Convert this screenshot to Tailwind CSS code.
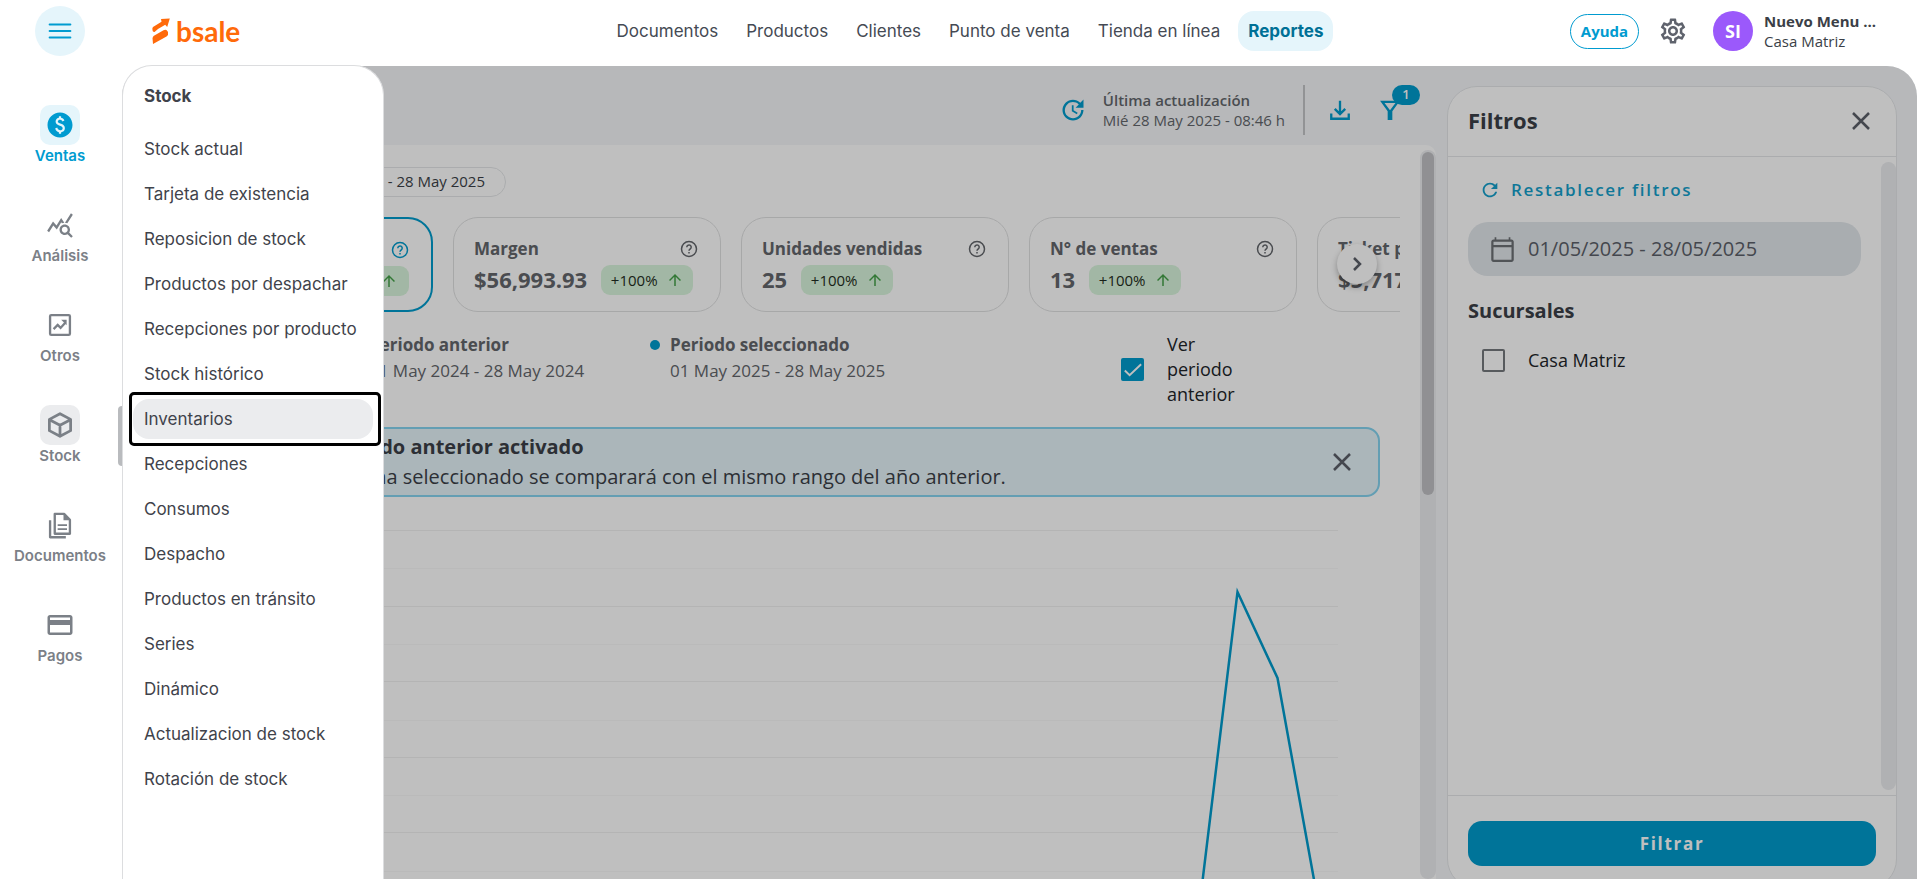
<!DOCTYPE html>
<html lang="es">

<head>
    <meta charset="UTF-8">
    <meta name="viewport" content="width=device-width, initial-scale=1.0">
    <title>bsale - Reportes</title>
    <script src="https://cdn.jsdelivr.net/npm/@tailwindcss/browser@4"></script>
</head>

<body class="flex h-screen flex-col overflow-hidden bg-white font-['Open_Sans','Noto_Sans',sans-serif] text-[#3b3f47]">
    <!-- Top bar -->
    <header class="flex h-[66px] shrink-0 items-center pb-1 pl-[35px] pr-10">
        <div class="flex flex-1 items-center">
            <button type="button" aria-label="Menú" class="flex size-[50px] items-center justify-center rounded-full bg-[#e5f5fb]">
                <svg class="size-[26px]" viewBox="0 0 24 24" fill="none" stroke="#009bd0" stroke-width="2" stroke-linecap="round">
                    <path d="M2.500 6h19M2.500 12h19M2.500 18h19" />
                </svg>
            </button>
            <a href="#" aria-label="bsale" class="ml-[67px] flex items-center gap-[6px]">
                <svg class="h-[26px] w-[18px]" viewBox="0 0 18 26" fill="#ff6a0a">
                    <path d="M1 9 9.500 3.800 9 1 17.800.5 15.200 9 13.200 6.800 6 11 2.500 14Q.6 14.200.500 12.300 0 10 1 9z" />
                    <path d="M1.500 18 11.500 12.300Q14 11 15.300 13L16 14V17L14.500 18.500 1 26 .500 20z" />
                </svg>
                <span class="font-['Lato',sans-serif] text-[28px] font-bold leading-none text-[#ff6a0a]">bsale</span>
            </a>
        </div>

        <nav class="ml-7 flex items-center gap-2 font-['Inter',sans-serif] text-[17px] text-[#454a54]">
            <a href="#" class="flex h-10 items-center px-[10px] pt-[2px]">Documentos</a>
            <a href="#" class="flex h-10 items-center px-[10px] pt-[2px]">Productos</a>
            <a href="#" class="flex h-10 items-center px-[10px] pt-[2px]">Clientes</a>
            <a href="#" class="flex h-10 items-center px-[10px] pt-[2px]">Punto de venta</a>
            <a href="#" class="flex h-10 items-center px-[10px] pt-[2px]">Tienda en línea</a>
            <a href="#" class="flex h-10 items-center rounded-2xl bg-[#e5f5fb] px-[10px] pt-[2px] font-bold text-[#007096]">Reportes</a>
        </nav>

        <div class="flex flex-1 items-center justify-end">
            <button type="button" class="h-[35px] w-[69px] rounded-full border-[1.5px] border-[#009bd0] text-[15px] font-bold text-[#009bd0]">Ayuda</button>
            <button type="button" aria-label="Configuración" class="ml-[19px]">
                <svg class="size-[30px]" viewBox="0 0 24 24" fill="#5f636d">
                    <path d="M19.430 12.980c.04-.32.07-.64.07-.98s-.03-.66-.07-.98l2.110-1.650c.19-.15.24-.42.12-.64l-2-3.460c-.09-.16-.26-.25-.44-.25-.06 0-.12.01-.17.03l-2.490 1c-.52-.4-1.080-.73-1.690-.98l-.38-2.650C14.460 2.180 14.250 2 14 2h-4c-.25 0-.46.18-.49.42l-.38 2.650c-.61.25-1.170.59-1.690.98l-2.490-1c-.06-.02-.12-.03-.18-.03-.17 0-.34.09-.43.25l-2 3.460c-.13.22-.07.49.12.64l2.110 1.650c-.04.32-.07.65-.07.98s.03.66.07.98l-2.110 1.650c-.19.15-.24.42-.12.64l2 3.460c.09.16.26.25.44.25.06 0 .12-.01.17-.03l2.490-1c.52.4 1.080.73 1.690.98l.38 2.650c.03.24.24.42.49.42h4c.25 0 .46-.18.49-.42l.38-2.650c.61-.25 1.170-.59 1.690-.98l2.490 1c.06.02.12.03.18.03.17 0 .34-.09.43-.25l2-3.460c.12-.22.07-.49-.12-.64l-2.110-1.650zm-1.980-1.710c.04.31.05.52.05.73 0 .21-.02.43-.05.73l-.14 1.130.89.7 1.080.84-.7 1.210-1.270-.51-1.040-.42-.9.68c-.43.32-.84.56-1.250.73l-1.060.43-.16 1.130-.2 1.350h-1.400l-.19-1.350-.16-1.130-1.060-.43c-.43-.18-.83-.41-1.230-.71l-.91-.7-1.060.43-1.270.51-.7-1.210 1.080-.84.89-.7-.14-1.130c-.03-.31-.05-.54-.05-.74s.02-.43.05-.73l.14-1.130-.89-.7-1.080-.84.7-1.210 1.270.51 1.040.42.9-.68c.43-.32.84-.56 1.250-.73l1.060-.43.16-1.130.2-1.350h1.390l.19 1.350.16 1.130 1.060.43c.43.18.83.41 1.230.71l.91.7 1.060-.43 1.270-.51.7 1.210-1.070.85-.89.7.14 1.130zM12 8c-2.210 0-4 1.790-4 4s1.790 4 4 4 4-1.790 4-4-1.790-4-4-4zm0 6c-1.100 0-2-.9-2-2s.9-2 2-2 2 .9 2 2-.9 2-2 2z" />
                </svg>
            </button>
            <div class="ml-[25px] flex size-10 items-center justify-center rounded-full bg-[#9b59fb] text-lg font-bold text-white">SI</div>
            <div class="ml-[11px] w-[113px] text-[15px] leading-5">
                <p class="font-bold">Nuevo Menu ...</p>
                <p>Casa Matriz</p>
            </div>
        </div>
    </header>

    <div class="flex min-h-0 flex-1">
        <!-- Sidebar -->
        <nav class="flex w-[122px] shrink-0 flex-col gap-[38px] pt-[39px] text-center font-['Inter',sans-serif] text-[15px] font-semibold leading-[22px] text-[#7b8087]">
            <a href="#" class="flex flex-col items-center pr-[2px] text-[#009bd0]">
                <span class="flex size-10 items-center justify-center rounded-[10px] bg-[#e5f5fb]">
                    <svg class="size-[30px]" viewBox="0 0 24 24" fill="currentColor">
                        <path d="M12 2C6.480 2 2 6.480 2 12s4.480 10 10 10 10-4.480 10-10S17.520 2 12 2zm.88 15.760V19h-1.750v-1.290c-.74-.18-2.390-.77-3.020-2.960l1.650-.67c.06.22.58 2.090 2.400 2.090.93 0 1.980-.48 1.980-1.610 0-.96-.7-1.460-2.280-2.030-1.100-.39-3.350-1.030-3.350-3.310 0-.1.010-2.400 2.620-2.960V5h1.750v1.240c1.840.32 2.510 1.790 2.660 2.230l-1.580.67c-.11-.35-.59-1.340-1.900-1.340-.7 0-1.810.37-1.810 1.390 0 .95.86 1.310 2.640 1.900 2.400.83 3.010 2.050 3.010 3.450 0 2.630-2.500 3.130-3.020 3.220z" />
                    </svg>
                </span>
                Ventas
            </a>
            <a href="#" class="flex flex-col items-center pr-[2px]">
                <span class="flex size-10 items-center justify-center">
                    <svg class="size-7" viewBox="0 0 24 24" fill="currentColor">
                        <path d="M19.880 18.470c.44-.7.7-1.510.7-2.390 0-2.490-2.010-4.500-4.500-4.500s-4.500 2.010-4.500 4.500 2.010 4.500 4.490 4.500c.88 0 1.700-.26 2.390-.7L21.580 23 23 21.580l-3.120-3.110zm-3.800.11c-1.380 0-2.500-1.120-2.500-2.500s1.120-2.500 2.500-2.500 2.500 1.120 2.500 2.500-1.120 2.500-2.500 2.500zm-.36-8.500c-.74.02-1.450.18-2.100.45l-.55-.83-3.800 6.180-3.010-3.520-3.630 5.810L1 17l5-8 3 3.500L13 6l2.720 4.080zm2.590.5c-.64-.28-1.330-.45-2.050-.49L21.380 2 23 3.180l-4.690 7.400z" />
                    </svg>
                </span>
                Análisis
            </a>
            <a href="#" class="flex flex-col items-center pr-[2px]">
                <span class="flex size-10 items-center justify-center">
                    <svg class="size-7" viewBox="0 0 24 24" fill="none" stroke="currentColor" stroke-width="2">
                        <rect x="3.500" y="3.500" width="17" height="17" rx="1" />
                        <path d="M6.500 15.500 10 12l2.500 2.500 4-4.500" />
                        <path d="M13 7.500h4.700v4.700z" fill="currentColor" stroke="none" />
                    </svg>
                </span>
                Otros
            </a>
            <a href="#" class="relative flex flex-col items-center pr-[2px]">
                <span class="flex size-10 items-center justify-center rounded-[10px] bg-[#ebecee]">
                    <svg class="size-[30px]" viewBox="0 0 24 24" fill="none" stroke="currentColor" stroke-width="2.200" stroke-linejoin="round">
                        <path d="M12 3 20.500 7.500v9L12 21l-8.500-4.500v-9zM4 8l8 4.200L20 8M12 12.200V21" />
                    </svg>
                </span>
                Stock
                <i class="absolute right-0 top-px h-[60px] w-1 rounded-l bg-[#b9bbbe]"></i>
            </a>
            <a href="#" class="flex flex-col items-center pr-[2px]">
                <span class="flex size-10 items-center justify-center">
                    <svg class="size-7" viewBox="0 0 24 24" fill="none" stroke="currentColor" stroke-width="2" stroke-linejoin="round">
                        <path d="M7.500 2.500h8l5 5v12h-13z" />
                        <path d="M15 2v6h6z" fill="currentColor" stroke="none" />
                        <path d="M10 12h8M10 15.500h8" stroke-width="1.500" />
                        <path d="M3.500 8v14.500H17" />
                    </svg>
                </span>
                Documentos
            </a>
            <a href="#" class="flex flex-col items-center pr-[2px]">
                <span class="flex size-10 items-center justify-center">
                    <svg class="size-[30px]" viewBox="0 0 24 24" fill="currentColor">
                        <path d="M20 4H4c-1.110 0-1.990.89-1.990 2L2 18c0 1.110.89 2 2 2h16c1.110 0 2-.89 2-2V6c0-1.110-.89-2-2-2zm0 14H4v-6h16v6zm0-10H4V6h16v2z" />
                    </svg>
                </span>
                Pagos
            </a>
        </nav>

        <div class="relative flex min-w-0 flex-1">
            <main class="relative flex min-w-0 flex-1 overflow-hidden rounded-t-[30px] bg-[#f4f6f9]">
                <!-- Report -->
                <section class="flex min-w-0 flex-1 flex-col pl-5">
                    <div class="flex h-[79px] shrink-0 items-center justify-end pr-[43px] pt-2">
                        <svg class="size-7" viewBox="0 0 24 24" fill="#009bcc">
                            <path d="M21 10.120h-6.780l2.740-2.820c-2.730-2.700-7.150-2.800-9.880-.1-2.730 2.710-2.730 7.080 0 9.790s7.150 2.710 9.880 0C18.320 15.650 19 14.080 19 12.100h2c0 1.980-.88 4.550-2.640 6.290-3.510 3.480-9.210 3.480-12.720 0-3.500-3.470-3.530-9.110-.02-12.580s9.140-3.470 12.650 0L21 3v7.120zM12.500 8v4.250l3.500 2.080-.72 1.210L11 13V8h1.500z" />
                        </svg>
                        <div class="ml-4 text-[15px] leading-5 text-[#63666b]">
                            <p class="font-semibold">Última actualización</p>
                            <p>Mié 28 May 2025 - 08:46 h</p>
                        </div>
                        <div class="ml-[18px] h-[50px] w-[2px] bg-[#c3c5c7]"></div>
                        <button type="button" aria-label="Descargar" class="ml-[21px]">
                            <svg class="size-7" viewBox="0 0 24 24" fill="none" stroke="#009bcc" stroke-width="2">
                                <path d="M12 4v11M7.500 11l4.500 4.500 4.500-4.500M4.500 15v4.500h15V15" />
                            </svg>
                        </button>
                        <button type="button" aria-label="Filtros" class="relative ml-[22px]">
                            <svg class="size-7" viewBox="0 0 24 24" fill="#009bcc" fill-rule="evenodd">
                                <path d="M3.500 4h17l-6.500 9v7.500h-4V13zM7.300 6l4.700 6.300L16.700 6z" />
                            </svg>
                            <span class="absolute -top-[11px] left-4 flex h-5 w-7 items-center justify-center rounded-full bg-[#009bcc] text-[13px] font-semibold text-white">1</span>
                        </button>
                    </div>

                    <div class="mr-[11px] flex min-h-0 flex-1 rounded-t-[10px] bg-white">
                        <div class="flex min-w-0 flex-1 flex-col overflow-hidden pl-[23px] pr-5 pt-[22px]">
                            <div class="flex h-[30px] w-[341px] shrink-0 items-center justify-end rounded-full border border-[#e4e6e8] pb-[2px] pr-5 text-[15px] font-medium">01 May 2025 - 28 May 2025</div>

                            <div class="relative mt-5 flex shrink-0">
                                <div class="flex flex-1 gap-5 overflow-hidden text-[#63666b]">
                                    <article aria-label="Venta" class="flex h-[95px] w-[268px] shrink-0 flex-col items-end rounded-[25px] border-2 border-[#009bcc] px-[22px] pt-[18px]">
                                        <div class="flex h-[25px] items-center">
                                            <svg class="size-[18px]" viewBox="0 0 18 18" fill="none" stroke="#009bcc" stroke-width="1.500">
                                                <circle cx="9" cy="9" r="7.500" />
                                                <path d="M6.800 7.200a2.200 2.200 0 1 1 3.500 1.700C9.400 9.600 9 9.900 9 10.800M9 12v1.500" />
                                            </svg>
                                        </div>
                                        <span class="mt-1 flex h-[30px] w-[92px] items-center justify-end rounded-[9px] bg-[#d9f5dc] pr-[11px]">
                                            <svg class="size-[18px]" viewBox="0 0 24 24" fill="#43a047"><path d="m4 12 1.410 1.410L11 7.830V20h2V7.830l5.580 5.590L20 12l-8-8-8 8z" /></svg>
                                        </span>
                                    </article>
                                    <article class="h-[95px] w-[268px] shrink-0 rounded-[25px] border border-[#dfe0e1] px-5 pt-[18px]">
                                        <div class="flex h-[25px] items-center justify-between">
                                            <h3 class="text-[17px] font-bold">Margen</h3>
                                            <svg class="mr-[2px] size-[18px]" viewBox="0 0 18 18" fill="none" stroke="#63666b" stroke-width="1.500">
                                                <circle cx="9" cy="9" r="7.500" />
                                                <path d="M6.800 7.200a2.200 2.200 0 1 1 3.500 1.700C9.400 9.600 9 9.900 9 10.800M9 12v1.500" />
                                            </svg>
                                        </div>
                                        <div class="mt-1 flex items-start gap-[14px]">
                                            <strong class="text-[22px] leading-7">$56,993.93</strong>
                                            <span class="flex h-[30px] w-[92px] items-center justify-center gap-2 rounded-[9px] bg-[#d9f5dc] text-[15px] font-medium text-[#1f2d22]">+100%
                                                <svg class="size-[18px]" viewBox="0 0 24 24" fill="#43a047"><path d="m4 12 1.410 1.410L11 7.830V20h2V7.830l5.580 5.590L20 12l-8-8-8 8z" /></svg>
                                            </span>
                                        </div>
                                    </article>
                                    <article class="h-[95px] w-[268px] shrink-0 rounded-[25px] border border-[#dfe0e1] px-5 pt-[18px]">
                                        <div class="flex h-[25px] items-center justify-between">
                                            <h3 class="text-[17px] font-bold">Unidades vendidas</h3>
                                            <svg class="mr-[2px] size-[18px]" viewBox="0 0 18 18" fill="none" stroke="#63666b" stroke-width="1.500">
                                                <circle cx="9" cy="9" r="7.500" />
                                                <path d="M6.800 7.200a2.200 2.200 0 1 1 3.500 1.700C9.400 9.600 9 9.900 9 10.800M9 12v1.500" />
                                            </svg>
                                        </div>
                                        <div class="mt-1 flex items-start gap-[14px]">
                                            <strong class="text-[22px] leading-7">25</strong>
                                            <span class="flex h-[30px] w-[92px] items-center justify-center gap-2 rounded-[9px] bg-[#d9f5dc] text-[15px] font-medium text-[#1f2d22]">+100%
                                                <svg class="size-[18px]" viewBox="0 0 24 24" fill="#43a047"><path d="m4 12 1.410 1.410L11 7.830V20h2V7.830l5.580 5.590L20 12l-8-8-8 8z" /></svg>
                                            </span>
                                        </div>
                                    </article>
                                    <article class="h-[95px] w-[268px] shrink-0 rounded-[25px] border border-[#dfe0e1] px-5 pt-[18px]">
                                        <div class="flex h-[25px] items-center justify-between">
                                            <h3 class="text-[17px] font-bold">N° de ventas</h3>
                                            <svg class="mr-[2px] size-[18px]" viewBox="0 0 18 18" fill="none" stroke="#63666b" stroke-width="1.500">
                                                <circle cx="9" cy="9" r="7.500" />
                                                <path d="M6.800 7.200a2.200 2.200 0 1 1 3.500 1.700C9.400 9.600 9 9.900 9 10.800M9 12v1.500" />
                                            </svg>
                                        </div>
                                        <div class="mt-1 flex items-start gap-[14px]">
                                            <strong class="text-[22px] leading-7">13</strong>
                                            <span class="flex h-[30px] w-[92px] items-center justify-center gap-2 rounded-[9px] bg-[#d9f5dc] text-[15px] font-medium text-[#1f2d22]">+100%
                                                <svg class="size-[18px]" viewBox="0 0 24 24" fill="#43a047"><path d="m4 12 1.410 1.410L11 7.830V20h2V7.830l5.580 5.590L20 12l-8-8-8 8z" /></svg>
                                            </span>
                                        </div>
                                    </article>
                                    <article class="h-[95px] w-[268px] shrink-0 rounded-[25px] border border-[#dfe0e1] px-5 pt-[18px]">
                                        <h3 class="text-[17px] font-bold leading-[25px]">Ticket promedio</h3>
                                        <strong class="mt-1 block text-[22px] leading-7">$5,717.16</strong>
                                    </article>
                                </div>
                                <button type="button" aria-label="Siguiente" class="absolute right-[23px] top-[27px] flex size-10 items-center justify-center rounded-full bg-white shadow-[0_3px_6px_rgba(0,0,0,0.3)]">
                                    <svg class="size-6" viewBox="0 0 24 24" fill="none" stroke="#5b5f69" stroke-width="2.500">
                                        <path d="m9 6 6 6-6 6" />
                                    </svg>
                                </button>
                            </div>

                            <div class="mt-5 flex shrink-0 items-start text-[17px] leading-[26px] text-[#63666b]">
                                <div class="flex w-[301px] gap-[10px] pl-[184px]">
                                    <i class="mt-2 size-[10px] shrink-0 rounded-full bg-[#9aa0a6]"></i>
                                    <div class="whitespace-nowrap">
                                        <h4 class="font-bold">Periodo anterior</h4>
                                        <p>01 May 2024 - 28 May 2024</p>
                                    </div>
                                </div>
                                <div class="ml-[184px] flex gap-[10px]">
                                    <i class="mt-2 size-[10px] shrink-0 rounded-full bg-[#009bcc]"></i>
                                    <div class="whitespace-nowrap">
                                        <h4 class="font-bold">Periodo seleccionado</h4>
                                        <p>01 May 2025 - 28 May 2025</p>
                                    </div>
                                </div>
                                <label class="ml-auto mr-[162px] flex w-[117px] items-center gap-[23px] text-lg leading-[25px] text-[#212429]">
                                    <span class="relative flex shrink-0">
                                        <input type="checkbox" checked class="size-[23px] appearance-none rounded-[2px] border-2 border-[#63666b] checked:border-[#009bcc] checked:bg-[#009bcc]">
                                        <svg class="pointer-events-none absolute inset-0 size-[23px]" viewBox="0 0 24 24" fill="none" stroke="#fff" stroke-width="2">
                                            <path d="m4 13 5 5L21 6.500" />
                                        </svg>
                                    </span>
                                    Ver periodo anterior
                                </label>
                            </div>

                            <div class="mr-5 mt-5 flex h-[70px] shrink-0 items-center rounded-[14px] border-2 border-[#84d3ef] bg-[#e4f3f9] pl-[70px] pr-6 text-xl leading-[30px]">
                                <div class="flex-1 text-[#3b3f47]">
                                    <h4 class="font-bold">Modo de periodo anterior activado</h4>
                                    <p>El rango de fecha seleccionado se comparará con el mismo rango del año anterior.</p>
                                </div>
                                <button type="button" aria-label="Cerrar aviso">
                                    <svg class="size-6" viewBox="0 0 24 24" fill="none" stroke="#5b5f69" stroke-width="2.500">
                                        <path d="m4 4 16 16M20 4 4 20" />
                                    </svg>
                                </button>
                            </div>

                            <div class="mt-[33px] min-h-0 flex-1 overflow-hidden pr-[62px]">
                                <svg class="w-full" viewBox="0 0 1173 380" fill="none">
                                    <path stroke="#f1f1f1" d="M0 .5h1173M0 76.500h1173M0 151.500h1173M0 227.500h1173M0 302.500h1173" />
                                    <path stroke="#f9f9f9" d="M0 38.500h1173M0 114.500h1173M0 190.500h1173M0 265.500h1173M0 341.500h1173" />
                                    <path stroke="#009bcc" stroke-width="2.500" d="m1034 380 38.500-318 40 86 42 232" />
                                </svg>
                            </div>
                        </div>
                        <div class="mt-[5px] w-4 shrink-0 rounded-full bg-[#ebecef] px-[2px] pt-[2px]">
                            <div class="h-[343px] rounded-full bg-[#c0c1c4]"></div>
                        </div>
                    </div>
                </section>

                <!-- Filters -->
                <aside class="-mb-[10px] mr-5 mt-5 flex w-[450px] shrink-0 flex-col rounded-[30px] border border-[#e4e6e8] bg-white">
                    <div class="flex h-[70px] shrink-0 items-center justify-between border-b border-[#e4e6e8] pb-[2px] pl-5 pr-[23px]">
                        <h2 class="text-[22px] font-bold">Filtros</h2>
                        <button type="button" aria-label="Cerrar filtros">
                            <svg class="size-6" viewBox="0 0 24 24" fill="none" stroke="#5b5f69" stroke-width="2.500">
                                <path d="m4 4 16 16M20 4 4 20" />
                            </svg>
                        </button>
                    </div>
                    <div class="flex min-h-0 flex-1 py-[5px]">
                        <div class="flex-1 px-5">
                            <button type="button" class="mt-[13px] flex h-[30px] items-center gap-[10px] pl-[11px] text-[17px] font-semibold tracking-widest text-[#149fcb]">
                                <svg class="size-[22px]" viewBox="0 0 24 24" fill="currentColor">
                                    <path d="M17.650 6.350C16.200 4.900 14.210 4 12 4c-4.420 0-7.990 3.580-7.990 8s3.570 8 7.990 8c3.730 0 6.840-2.550 7.730-6h-2.080c-.82 2.330-3.040 4-5.650 4-3.310 0-6-2.690-6-6s2.690-6 6-6c1.660 0 3.140.69 4.220 1.780L13 11h7V4l-2.350 2.350z" />
                                </svg>
                                Restablecer filtros
                            </button>
                            <label class="mt-[17px] flex h-[54px] items-center gap-3 rounded-[20px] bg-[#e2e7eb] pl-[21px] pr-4">
                                <svg class="size-[27px] shrink-0" viewBox="0 0 24 24" fill="#6c7074">
                                    <path d="M20 3h-1V1h-1.500v2h-11V1H5v2H4c-1.100 0-2 .9-2 2v16c0 1.100.9 2 2 2h16c1.100 0 2-.9 2-2V5c0-1.100-.9-2-2-2zm0 18H4V10h16v11zm0-13H4V5h16v3z" />
                                </svg>
                                <input type="text" aria-label="Rango de fechas" value="01/05/2025 - 28/05/2025" class="w-full min-w-0 bg-transparent text-xl text-[#5b5f69] outline-none">
                            </label>
                            <h3 class="mt-5 text-xl font-bold leading-[30px]">Sucursales</h3>
                            <label class="mt-[19px] flex h-[30px] items-center gap-[23px] pl-[14px] text-lg text-[#212429]">
                                <input type="checkbox" class="size-[23px] appearance-none rounded-[2px] border-2 border-[#75787c]">
                                Casa Matriz
                            </label>
                        </div>
                        <div class="w-[15px] rounded-full bg-[#ebecef]"></div>
                    </div>
                    <div class="shrink-0 border-t border-[#e4e6e8] px-5 pb-[22px] pt-[25px]">
                        <button type="button" class="h-[45px] w-full rounded-[14px] bg-[#009bcc] text-[17px] font-bold tracking-widest text-white">Filtrar</button>
                    </div>
                </aside>

                <div class="absolute inset-0 bg-black/25"></div>
            </main>

            <!-- Stock submenu -->
            <nav class="absolute -top-px bottom-0 left-0 w-[262px] rounded-t-[30px] border border-b-0 border-[#dcdddf] bg-white px-[10px] pt-[15px] font-['Inter',sans-serif] text-[17px] text-[#3f434b]">
                <h2 class="mb-[18px] px-[11px] leading-[30px] font-bold">Stock</h2>
                <ul class="flex flex-col gap-[5px]">
                    <li><a href="#" class="flex h-10 items-center rounded-2xl px-[11px] pt-[2px]">Stock actual</a></li>
                    <li><a href="#" class="flex h-10 items-center rounded-2xl px-[11px] pt-[2px]">Tarjeta de existencia</a></li>
                    <li><a href="#" class="flex h-10 items-center rounded-2xl px-[11px] pt-[2px]">Reposicion de stock</a></li>
                    <li><a href="#" class="flex h-10 items-center rounded-2xl px-[11px] pt-[2px]">Productos por despachar</a></li>
                    <li><a href="#" class="flex h-10 items-center whitespace-nowrap rounded-2xl px-[11px] pt-[2px]">Recepciones por producto</a></li>
                    <li><a href="#" class="flex h-10 items-center rounded-2xl px-[11px] pt-[2px]">Stock histórico</a></li>
                    <li class="relative">
                        <a href="#" class="flex h-10 items-center rounded-2xl bg-[#ebecee] px-[11px] pt-[2px]">Inventarios</a>
                        <i class="pointer-events-none absolute -inset-y-[7px] -left-1 -right-2 rounded-[5px] border-[3px] border-black"></i>
                    </li>
                    <li><a href="#" class="flex h-10 items-center rounded-2xl px-[11px] pt-[2px]">Recepciones</a></li>
                    <li><a href="#" class="flex h-10 items-center rounded-2xl px-[11px] pt-[2px]">Consumos</a></li>
                    <li><a href="#" class="flex h-10 items-center rounded-2xl px-[11px] pt-[2px]">Despacho</a></li>
                    <li><a href="#" class="flex h-10 items-center rounded-2xl px-[11px] pt-[2px]">Productos en tránsito</a></li>
                    <li><a href="#" class="flex h-10 items-center rounded-2xl px-[11px] pt-[2px]">Series</a></li>
                    <li><a href="#" class="flex h-10 items-center rounded-2xl px-[11px] pt-[2px]">Dinámico</a></li>
                    <li><a href="#" class="flex h-10 items-center rounded-2xl px-[11px] pt-[2px]">Actualizacion de stock</a></li>
                    <li><a href="#" class="flex h-10 items-center rounded-2xl px-[11px] pt-[2px]">Rotación de stock</a></li>
                </ul>
            </nav>
        </div>
    </div>
</body>

</html>
